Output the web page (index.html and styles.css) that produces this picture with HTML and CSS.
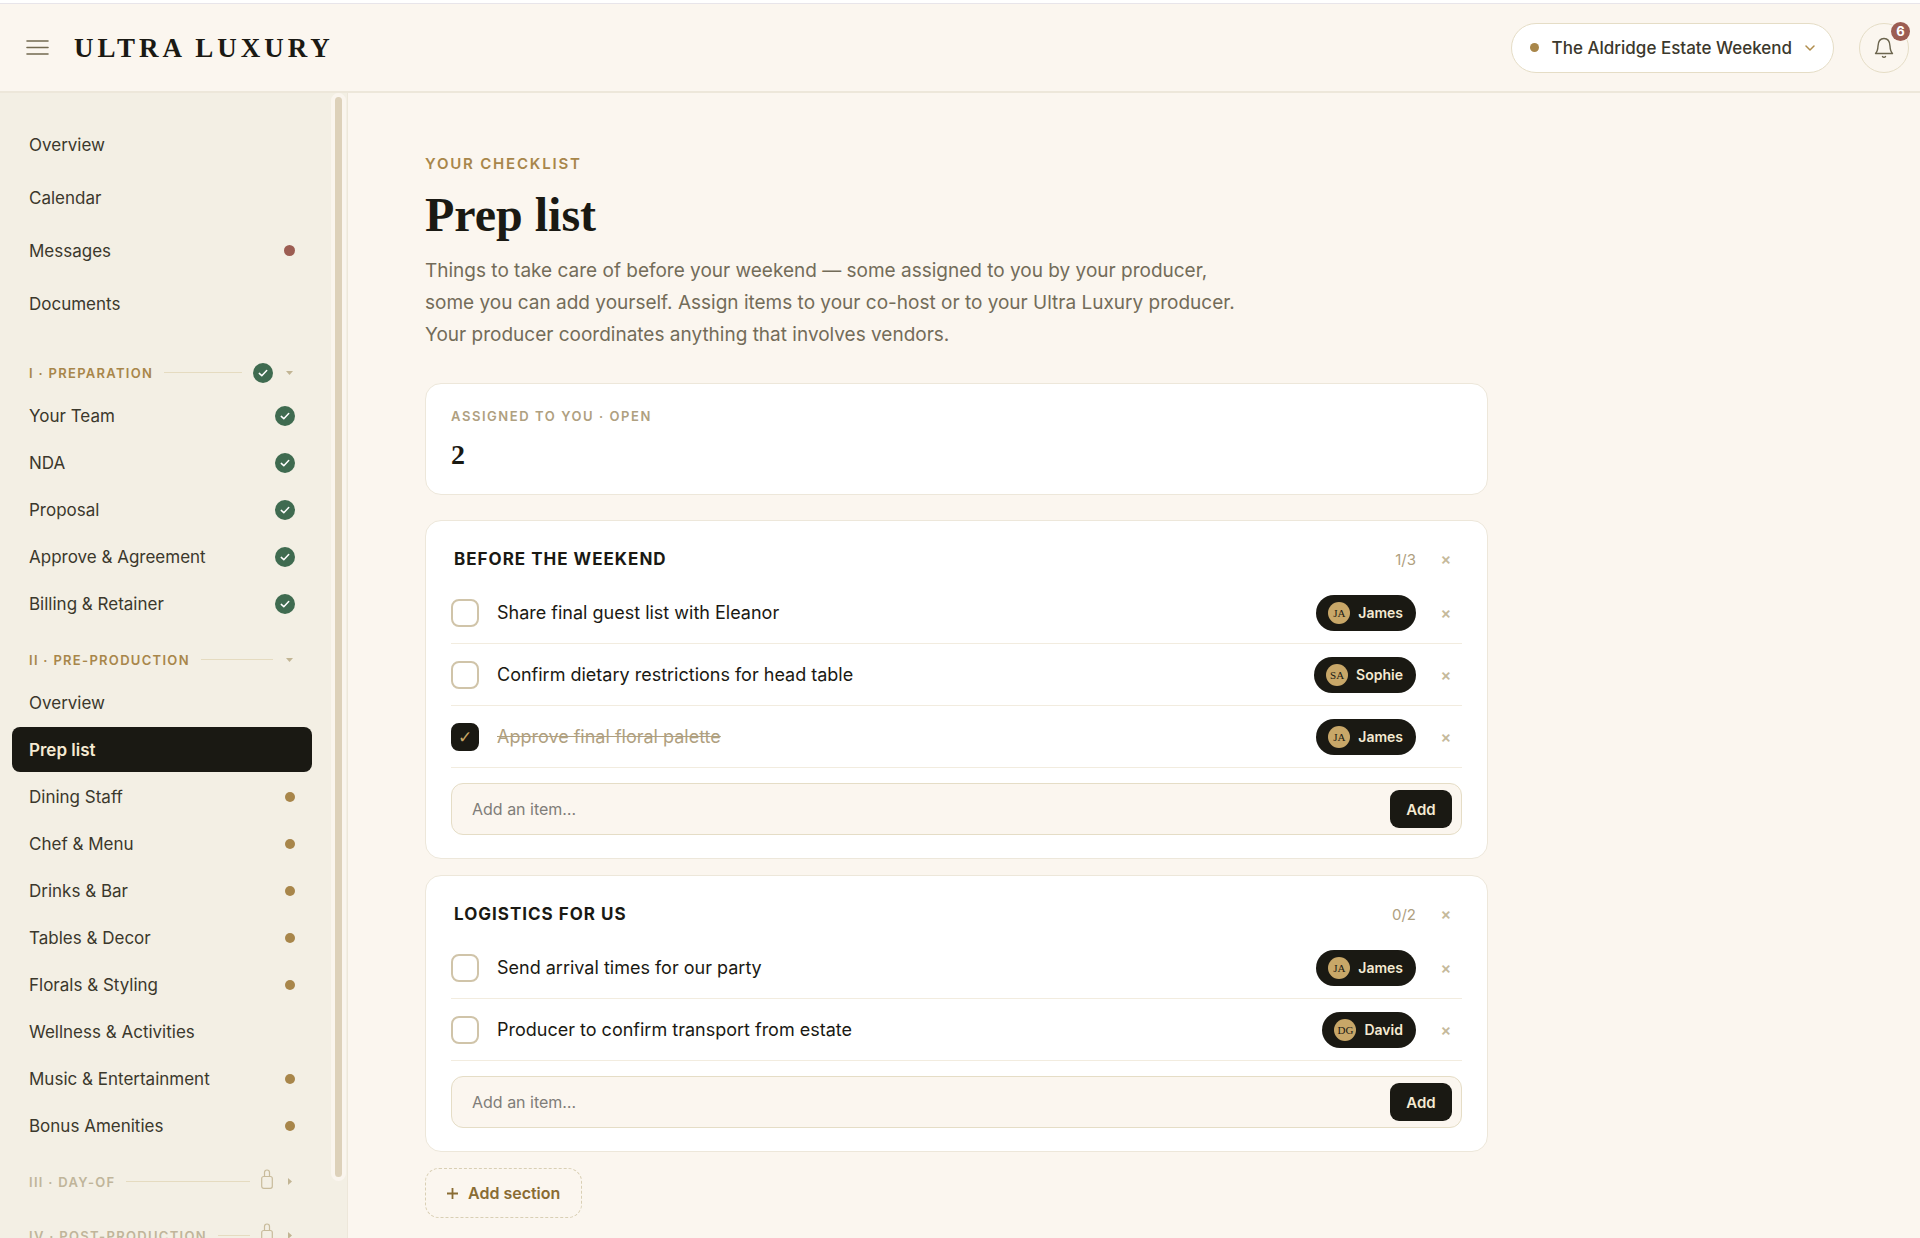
FILE: index.html
```
<!DOCTYPE html>
<html lang="en">
<head>
<meta charset="utf-8">
<meta name="viewport" content="width=device-width, initial-scale=1">
<title>Prep list · Ultra Luxury</title>
<link rel="stylesheet" href="styles.css">
</head>
<body>
<svg class="sprite" aria-hidden="true">
  <symbol id="done" viewBox="0 0 20 20"><circle cx="10" cy="10" r="10" fill="#3f6b50"/><path d="M6.300 10.400l2.500 2.400 4.900-5.200" fill="none" stroke="#fff" stroke-width="1.500" stroke-linecap="round" stroke-linejoin="round"/></symbol>
  <symbol id="open" viewBox="0 0 11 11"><path d="M2 4h7L5.500 8z" fill="#c2b594"/></symbol>
  <symbol id="shut" viewBox="0 0 11 11"><path d="M4 2v7l4-3.500z" fill="#c2b594"/></symbol>
  <symbol id="lock" viewBox="0 0 12 20"><path d="M3.500 7.500V3.500a2.500 2.500 0 0 1 5 0v4" fill="none" stroke="#c8bb9b" stroke-width="1.200"/><rect x=".700" y="7.500" width="10.600" height="11.800" rx="2" fill="none" stroke="#c8bb9b" stroke-width="1.200"/></symbol>
</svg>
<div class="app">
  <header class="topbar">
    <button class="menu" aria-label="Menu"><svg width="23" height="15" viewBox="0 0 23 15" stroke="#736a50" stroke-width="1.600" stroke-linecap="round"><path d="M1 1h21M1 7.500h21M1 14h21"/></svg></button>
    <a class="logo" href="#">ULTRA LUXURY</a>
    <button class="event"><span class="event-dot"></span>The Aldridge Estate Weekend<svg width="10" height="6" viewBox="0 0 10 6"><path d="M1 1l4 4 4-4" fill="none" stroke="#b08d4c" stroke-width="1.500" stroke-linecap="round" stroke-linejoin="round"/></svg></button>
    <button class="bell" aria-label="Notifications"><svg width="20" height="22" viewBox="0 0 20 22" fill="none" stroke="#6c654e" stroke-width="1.400" stroke-linecap="round" stroke-linejoin="round"><path d="M1.500 16.500c1.700-1.600 2.300-3.500 2.500-7.500.2-4.500 2.300-7.500 6-7.500s5.800 3 6 7.500c.2 4 .8 5.900 2.500 7.500z"/><path d="M8.500 19.600c.7.900 2.300.9 3 0"/></svg><span class="badge">6</span></button>
  </header>

  <nav class="sidebar" aria-label="Event">
    <ul class="primary">
      <li><a href="#">Overview</a></li>
      <li><a href="#">Calendar</a></li>
      <li><a href="#">Messages<span class="dot alert"></span></a></li>
      <li><a href="#">Documents</a></li>
    </ul>

    <button class="phase first">I · PREPARATION<span class="rule"></span><svg class="i20"><use href="#done"/></svg><svg class="i11"><use href="#open"/></svg></button>
    <ul>
      <li><a href="#">Your Team<svg class="i20"><use href="#done"/></svg></a></li>
      <li><a href="#">NDA<svg class="i20"><use href="#done"/></svg></a></li>
      <li><a href="#">Proposal<svg class="i20"><use href="#done"/></svg></a></li>
      <li><a href="#">Approve &amp; Agreement<svg class="i20"><use href="#done"/></svg></a></li>
      <li><a href="#">Billing &amp; Retainer<svg class="i20"><use href="#done"/></svg></a></li>
    </ul>

    <button class="phase">II · PRE-PRODUCTION<span class="rule"></span><svg class="i11"><use href="#open"/></svg></button>
    <ul>
      <li><a href="#">Overview</a></li>
      <li><a class="current" href="#" aria-current="page">Prep list</a></li>
      <li><a href="#">Dining Staff<span class="dot"></span></a></li>
      <li><a href="#">Chef &amp; Menu<span class="dot"></span></a></li>
      <li><a href="#">Drinks &amp; Bar<span class="dot"></span></a></li>
      <li><a href="#">Tables &amp; Decor<span class="dot"></span></a></li>
      <li><a href="#">Florals &amp; Styling<span class="dot"></span></a></li>
      <li><a href="#">Wellness &amp; Activities</a></li>
      <li><a href="#">Music &amp; Entertainment<span class="dot"></span></a></li>
      <li><a href="#">Bonus Amenities<span class="dot"></span></a></li>
    </ul>

    <button class="phase locked">III · DAY-OF<span class="rule"></span><svg class="lock"><use href="#lock"/></svg><svg class="i11"><use href="#shut"/></svg></button>
    <button class="phase locked">IV · POST-PRODUCTION<span class="rule"></span><svg class="lock"><use href="#lock"/></svg><svg class="i11"><use href="#shut"/></svg></button>
    <div class="scrollbar"></div>
  </nav>

  <main class="main">
    <div class="content">
      <p class="eyebrow">YOUR CHECKLIST</p>
      <h1>Prep list</h1>
      <p class="intro">Things to take care of before your weekend — some assigned to you by your producer, some you can add yourself. Assign items to your co-host or to your Ultra Luxury producer. Your producer coordinates anything that involves vendors.</p>

      <section class="card stat">
        <p class="stat-label">ASSIGNED TO YOU · OPEN</p>
        <p class="stat-value">2</p>
      </section>

      <div class="lists">
        <section class="card list">
          <div class="list-head"><h2>BEFORE THE WEEKEND</h2><span class="count">1/3</span><button class="remove" aria-label="Remove section">×</button></div>
          <ul>
            <li class="task"><input type="checkbox" id="t1"><label for="t1">Share final guest list with Eleanor</label><button class="person"><span class="avatar">JA</span>James</button><button class="remove" aria-label="Remove item">×</button></li>
            <li class="task"><input type="checkbox" id="t2"><label for="t2">Confirm dietary restrictions for head table</label><button class="person"><span class="avatar">SA</span>Sophie</button><button class="remove" aria-label="Remove item">×</button></li>
            <li class="task"><input type="checkbox" id="t3" checked><label for="t3">Approve final floral palette</label><button class="person"><span class="avatar">JA</span>James</button><button class="remove" aria-label="Remove item">×</button></li>
          </ul>
          <form class="add"><input type="text" placeholder="Add an item…" aria-label="Add an item"><button type="button">Add</button></form>
        </section>

        <section class="card list">
          <div class="list-head"><h2>LOGISTICS FOR US</h2><span class="count">0/2</span><button class="remove" aria-label="Remove section">×</button></div>
          <ul>
            <li class="task"><input type="checkbox" id="t4"><label for="t4">Send arrival times for our party</label><button class="person"><span class="avatar">JA</span>James</button><button class="remove" aria-label="Remove item">×</button></li>
            <li class="task"><input type="checkbox" id="t5"><label for="t5">Producer to confirm transport from estate</label><button class="person"><span class="avatar">DG</span>David</button><button class="remove" aria-label="Remove item">×</button></li>
          </ul>
          <form class="add"><input type="text" placeholder="Add an item…" aria-label="Add an item"><button type="button">Add</button></form>
        </section>

        <button class="add-section"><svg width="11" height="11" viewBox="0 0 11 11" stroke="#8a6c33" stroke-width="1.800"><path d="M5.500 0v11M0 5.500h11"/></svg>Add section</button>
      </div>
    </div>
  </main>
</div>
</body>
</html>
```
FILE: styles.css
```
:root {
  --bg: #fbf6ef;
  --panel: #f3efe4;
  --line: #ede7da;
  --edge: #e5ddc6;
  --ink: #1a1913;
  --text: #3b382c;
  --muted: #736c59;
  --sand: #afa080;
  --gold: #a8864a;
  --cream: #f5ead2;
  --red: #9c5d52;
  --serif: "Liberation Serif", "Times New Roman", serif;
}

* { box-sizing: border-box; }

body {
  margin: 0;
  background: var(--bg);
  color: var(--ink);
  font-family: Inter, "Liberation Sans", sans-serif;
  font-size: 17px;
}

h1, h2, p, ul { margin: 0; padding: 0; }
ul { list-style: none; }
a { color: inherit; text-decoration: none; }
button {
  margin: 0;
  padding: 0;
  border: 0;
  background: none;
  color: inherit;
  font: inherit;
  cursor: pointer;
}
svg { flex: none; display: block; }
.sprite { position: absolute; width: 0; height: 0; }
.i20 { width: 20px; height: 20px; }
.i11 { width: 11px; height: 11px; }
.lock { width: 12px; height: 20px; margin-bottom: 6px; }

.app {
  display: grid;
  grid-template: auto minmax(0, 1fr) / 348px minmax(0, 1fr);
  height: 100vh;
  border-top: 3px solid #fff;
}

/* Top bar */
.topbar {
  grid-column: 1 / -1;
  display: flex;
  align-items: center;
  height: 90px;
  padding: 0 11px 0 26px;
  border-top: 1px solid #e8e5ea;
  border-bottom: 2px solid var(--line);
}
.logo {
  margin-left: 25px;
  font: bold 27px/36px var(--serif);
  letter-spacing: 4px;
}
.event {
  display: flex;
  align-items: center;
  height: 50px;
  margin-left: auto;
  padding: 0 18px;
  gap: 13px;
  border: 1px solid var(--edge);
  border-radius: 25px;
  background: #fff;
  color: var(--text);
  font-weight: 500;
}
.event-dot { width: 9px; height: 9px; border-radius: 50%; background: var(--gold); }
.bell {
  position: relative;
  display: grid;
  place-items: center;
  width: 50px;
  height: 50px;
  margin-left: 25px;
  border: 1px solid var(--edge);
  border-radius: 50%;
}
.badge {
  position: absolute;
  top: -2px;
  right: -2px;
  width: 19px;
  height: 19px;
  border-radius: 50%;
  background: var(--red);
  box-shadow: 0 0 0 1px var(--bg);
  color: #fff;
  font-size: 13px;
  font-weight: 700;
  line-height: 19px;
  text-align: center;
}

/* Sidebar */
.sidebar {
  position: relative;
  overflow: hidden;
  padding: 26px 35px 0 12px;
  border-right: 1px solid var(--line);
  background: var(--panel);
  color: var(--text);
}
.sidebar ul { display: grid; gap: 2px; }
.sidebar a {
  display: flex;
  align-items: center;
  justify-content: space-between;
  height: 45px;
  padding: 0 17px;
  border-radius: 8px;
}
.sidebar .primary a { height: 51px; }
.sidebar .current { background: var(--ink); color: var(--cream); font-weight: 600; }
.dot { width: 10px; height: 10px; border-radius: 50%; background: var(--gold); }
.alert { width: 11px; height: 11px; background: var(--red); }
.phase {
  display: flex;
  align-items: center;
  width: 100%;
  height: 41px;
  margin-top: 13px;
  padding: 0 17px;
  gap: 11px;
  color: var(--gold);
  font-size: 13px;
  font-weight: 600;
  letter-spacing: 0.1em;
}
.phase.first { margin-top: 23px; }
.locked { color: #c0b59a; }
.rule { flex: 1; height: 1px; background: #e5dbc0; }
.scrollbar {
  position: absolute;
  top: 0;
  right: 1px;
  width: 15px;
  height: 95%;
  border: 4px solid #faf5ee;
  border-radius: 8px;
  background: #ddd1ba;
}

/* Main column */
.main { overflow: hidden auto; padding: 60px 77px 16px; }
.content { max-width: 1063px; }
.eyebrow {
  margin-bottom: 10px;
  color: var(--gold);
  font-size: 15px;
  font-weight: 600;
  line-height: 22px;
  letter-spacing: 0.12em;
}
h1 { margin-bottom: 10px; font: bold 48px/60px var(--serif); }
.intro {
  max-width: 820px;
  margin-bottom: 32px;
  color: var(--muted);
  font-size: 19px;
  line-height: 32px;
}

.card {
  padding: 21px 25px 23px;
  border: 1px solid var(--line);
  border-radius: 16px;
  background: #fff;
}
.stat { margin-bottom: 25px; }
.stat-label {
  margin-bottom: 12px;
  color: var(--sand);
  font-size: 13px;
  font-weight: 600;
  line-height: 22px;
  letter-spacing: 0.12em;
}
.stat-value { font: bold 28px/32px var(--serif); }

.lists { display: grid; gap: 16px; justify-items: start; }
.list { width: 100%; }
.list-head {
  display: flex;
  align-items: center;
  height: 34px;
  margin-bottom: 6px;
  padding-left: 3px;
}
h2 { flex: 1; font-size: 17px; font-weight: 700; letter-spacing: 1px; }
.count { color: var(--sand); font-size: 15px; }
.remove {
  width: 32px;
  height: 32px;
  margin-left: 14px;
  color: #c5b99b;
  font-size: 16px;
  font-weight: 600;
}

.task {
  display: flex;
  align-items: center;
  height: 62px;
  border-bottom: 1px solid #f2ecdf;
  font-size: 18px;
}
.task label { flex: 1; padding-left: 18px; }
.task input {
  appearance: none;
  display: grid;
  place-items: center;
  width: 28px;
  height: 28px;
  margin: 0;
  border: 2px solid #d0c4a9;
  border-radius: 8px;
  background: #fff;
}
.task input:checked { border-color: var(--ink); background: var(--ink); }
.task input:checked::after {
  content: "✓";
  color: #c9a765;
  font: bold 17px/20px "DejaVu Sans", sans-serif;
}
.task input:checked + label { color: var(--sand); text-decoration: line-through; }
.person {
  display: flex;
  align-items: center;
  height: 36px;
  padding: 0 13px 0 12px;
  gap: 8px;
  border-radius: 18px;
  background: var(--ink);
  color: var(--cream);
  font-size: 14px;
  font-weight: 600;
}
.avatar {
  width: 22px;
  border-radius: 50%;
  background: #c8a768;
  color: var(--ink);
  font: 11px/22px var(--serif);
  text-align: center;
}

.add {
  display: flex;
  align-items: center;
  height: 52px;
  margin-top: 15px;
  padding-right: 9px;
  border: 1px solid var(--edge);
  border-radius: 12px;
  background: var(--bg);
}
.add input {
  flex: 1;
  min-width: 0;
  height: 100%;
  padding: 0 20px;
  border: 0;
  outline: 0;
  background: none;
  color: var(--ink);
  font: inherit;
  font-size: 16px;
}
.add input::placeholder { color: #7f7d79; }
.add button {
  width: 62px;
  height: 38px;
  border-radius: 9px;
  background: var(--ink);
  color: var(--cream);
  font-size: 15px;
  font-weight: 600;
}
.add-section {
  display: flex;
  align-items: center;
  height: 50px;
  padding: 0 21px;
  gap: 10px;
  border: 1px dashed #d9cfb4;
  border-radius: 14px;
  color: #8a6c33;
  font-size: 16px;
  font-weight: 600;
}
```
